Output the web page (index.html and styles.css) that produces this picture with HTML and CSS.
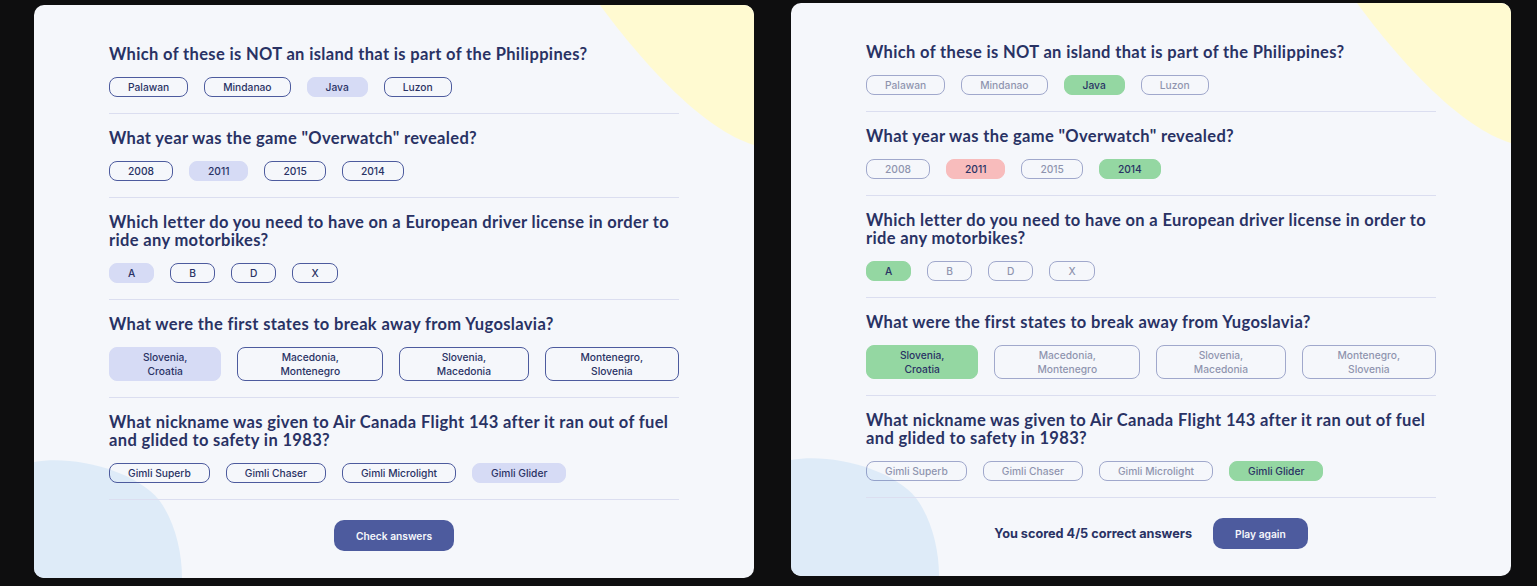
FILE: index.html
```html
<!DOCTYPE html>
<html lang="en">
<head>
<meta charset="utf-8">
<title>Quizzical</title>
<link rel="stylesheet" href="styles.css">
</head>
<body>
<div class="page">
  <section class="panel panel-left">
    <svg class="blobs" viewBox="0 0 720 573" preserveAspectRatio="none" aria-hidden="true">
      <path class="blob-yellow" d="M566 0 C610 60 670 125 720 140 L720 0 Z"/>
      <path class="blob-blue" d="M0 457 C40 450 100 465 125 495 C140 515 148 545 148 573 L0 573 Z"/>
    </svg>
    <div class="quiz">
      <div class="question">
        <h2 class="q-text">Which of these is NOT an island that is part of the Philippines?</h2>
        <div class="answers">
          <button class="answer">Palawan</button>
          <button class="answer">Mindanao</button>
          <button class="answer selected">Java</button>
          <button class="answer">Luzon</button>
        </div>
      </div>
      <div class="question">
        <h2 class="q-text">What year was the game "Overwatch" revealed?</h2>
        <div class="answers">
          <button class="answer">2008</button>
          <button class="answer selected">2011</button>
          <button class="answer">2015</button>
          <button class="answer">2014</button>
        </div>
      </div>
      <div class="question">
        <h2 class="q-text">Which letter do you need to have on a European driver license in order to ride any motorbikes?</h2>
        <div class="answers">
          <button class="answer selected">A</button>
          <button class="answer">B</button>
          <button class="answer">D</button>
          <button class="answer">X</button>
        </div>
      </div>
      <div class="question">
        <h2 class="q-text">What were the first states to break away from Yugoslavia?</h2>
        <div class="answers">
          <button class="answer selected">Slovenia, Croatia</button>
          <button class="answer">Macedonia, Montenegro</button>
          <button class="answer">Slovenia, Macedonia</button>
          <button class="answer">Montenegro, Slovenia</button>
        </div>
      </div>
      <div class="question">
        <h2 class="q-text">What nickname was given to Air Canada Flight 143 after it ran out of fuel and glided to safety in 1983?</h2>
        <div class="answers">
          <button class="answer">Gimli Superb</button>
          <button class="answer">Gimli Chaser</button>
          <button class="answer">Gimli Microlight</button>
          <button class="answer selected">Gimli Glider</button>
        </div>
      </div>
      <div class="footer">
        <button class="primary-btn">Check answers</button>
      </div>
    </div>
  </section>

  <section class="panel panel-right">
    <svg class="blobs" viewBox="0 0 720 573" preserveAspectRatio="none" aria-hidden="true">
      <path class="blob-yellow" d="M566 0 C610 60 670 125 720 140 L720 0 Z"/>
      <path class="blob-blue" d="M0 457 C40 450 100 465 125 495 C140 515 148 545 148 573 L0 573 Z"/>
    </svg>
    <div class="quiz">
      <div class="question">
        <h2 class="q-text">Which of these is NOT an island that is part of the Philippines?</h2>
        <div class="answers">
          <button class="answer faded">Palawan</button>
          <button class="answer faded">Mindanao</button>
          <button class="answer correct">Java</button>
          <button class="answer faded">Luzon</button>
        </div>
      </div>
      <div class="question">
        <h2 class="q-text">What year was the game "Overwatch" revealed?</h2>
        <div class="answers">
          <button class="answer faded">2008</button>
          <button class="answer wrong">2011</button>
          <button class="answer faded">2015</button>
          <button class="answer correct">2014</button>
        </div>
      </div>
      <div class="question">
        <h2 class="q-text">Which letter do you need to have on a European driver license in order to ride any motorbikes?</h2>
        <div class="answers">
          <button class="answer correct">A</button>
          <button class="answer faded">B</button>
          <button class="answer faded">D</button>
          <button class="answer faded">X</button>
        </div>
      </div>
      <div class="question">
        <h2 class="q-text">What were the first states to break away from Yugoslavia?</h2>
        <div class="answers">
          <button class="answer correct">Slovenia, Croatia</button>
          <button class="answer faded">Macedonia, Montenegro</button>
          <button class="answer faded">Slovenia, Macedonia</button>
          <button class="answer faded">Montenegro, Slovenia</button>
        </div>
      </div>
      <div class="question">
        <h2 class="q-text">What nickname was given to Air Canada Flight 143 after it ran out of fuel and glided to safety in 1983?</h2>
        <div class="answers">
          <button class="answer faded">Gimli Superb</button>
          <button class="answer faded">Gimli Chaser</button>
          <button class="answer faded">Gimli Microlight</button>
          <button class="answer correct">Gimli Glider</button>
        </div>
      </div>
      <div class="footer">
        <p class="score">You scored 4/5 correct answers</p>
        <button class="primary-btn">Play again</button>
      </div>
    </div>
  </section>
</div>
</body>
</html>
```

FILE: styles.css
```css
* {
  box-sizing: border-box;
}

html, body {
  margin: 0;
  padding: 0;
  background: #0e0e0f;
  height: 100%;
  overflow: hidden;
}

.page {
  display: flex;
  align-items: flex-start;
  gap: 37px;
  padding-left: 34px;
}

.panel {
  position: relative;
  width: 720px;
  height: 573px;
  background: #f5f7fb;
  border-radius: 10px;
  overflow: hidden;
}

.panel-left {
  margin-top: 5px;
}

.panel-right {
  margin-top: 3px;
}

.blobs {
  position: absolute;
  inset: 0;
  width: 100%;
  height: 100%;
  z-index: 0;
}

.blob-yellow {
  fill: #fffad1;
}

.blob-blue {
  fill: #deebf8;
}

.quiz {
  position: relative;
  z-index: 1;
  padding: 25px 75px 0;
}

.question {
  padding: 15px 0 16px;
  border-bottom: 1px solid #dbdef0;
}

.q-text {
  margin: 0;
  font-family: "Lato", "Open Sans", sans-serif;
  font-weight: 700;
  font-size: 16.5px;
  line-height: 18px;
  color: #293264;
  letter-spacing: 0.35px;
}

.answers {
  display: flex;
  gap: 16px;
  margin-top: 14px;
}

.answer {
  font-family: "Inter", "Liberation Sans", sans-serif;
  font-weight: 500;
  font-size: 10.24px;
  line-height: 14px;
  color: #293264;
  background: transparent;
  border: 1px solid #4d5b9e;
  border-radius: 8px;
  padding: 2px 18px;
  margin: 0;
  text-align: center;
}

.answer.selected {
  background: #d6dbf5;
  border-color: #d6dbf5;
}

.answer.correct {
  background: #94d7a2;
  border-color: #94d7a2;
}

.answer.wrong {
  background: #f8bcbc;
  border-color: #f8bcbc;
}

.answer.faded {
  opacity: 0.5;
}

.footer {
  display: flex;
  justify-content: center;
  align-items: center;
  gap: 21px;
  margin-top: 20px;
}

.primary-btn {
  font-family: "Inter", "Liberation Sans", sans-serif;
  font-weight: 600;
  font-size: 10.24px;
  line-height: 14px;
  color: #f5f7fb;
  background: #4d5b9e;
  border: none;
  border-radius: 10px;
  height: 31px;
  padding: 0 22px;
  margin: 0;
}

.score {
  margin: 0;
  font-family: "Inter", "Liberation Sans", sans-serif;
  font-weight: 700;
  font-size: 12.7px;
  color: #293264;
}
```
